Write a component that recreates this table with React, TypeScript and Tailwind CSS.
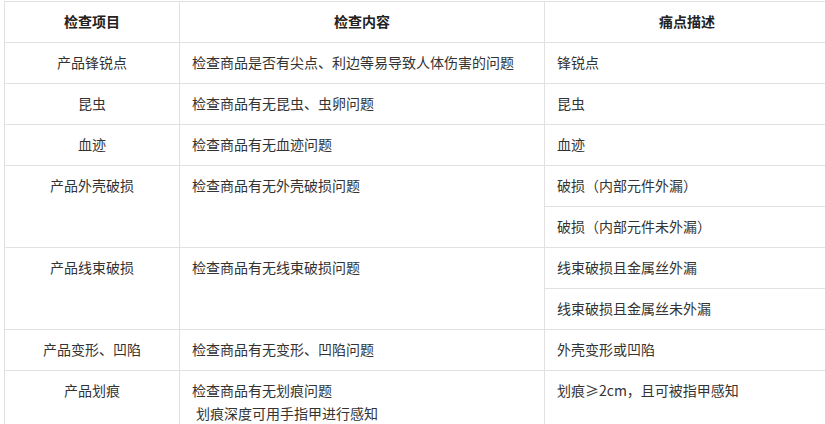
import React from 'react'

// 检查项 — 一行或多行痛点（多行时前两列合并）
interface Item {
  xiang: string
  neirong: React.ReactNode
  tongdian: string[]
}

const ITEMS: Item[] = [
  { xiang: '产品锋锐点', neirong: '检查商品是否有尖点、利边等易导致人体伤害的问题', tongdian: ['锋锐点'] },
  { xiang: '昆虫', neirong: '检查商品有无昆虫、虫卵问题', tongdian: ['昆虫'] },
  { xiang: '血迹', neirong: '检查商品有无血迹问题', tongdian: ['血迹'] },
  { xiang: '产品外壳破损', neirong: '检查商品有无外壳破损问题', tongdian: ['破损（内部元件外漏）', '破损（内部元件未外漏）'] },
  { xiang: '产品线束破损', neirong: '检查商品有无线束破损问题', tongdian: ['线束破损且金属丝外漏', '线束破损且金属丝未外漏'] },
  { xiang: '产品变形、凹陷', neirong: '检查商品有无变形、凹陷问题', tongdian: ['外壳变形或凹陷'] },
  {
    xiang: '产品划痕',
    neirong: (
      <>
        检查商品有无划痕问题
        <br />
        <span className="pl-[4px]">划痕深度可用手指甲进行感知</span>
      </>
    ),
    tongdian: ['划痕≥2cm，且可被指甲感知'],
  },
]

const cell = 'border border-[#e1e1e1] h-[41px] px-[12px] pt-[8px] pb-[9px] leading-[23px] align-top'

export default function App() {
  return (
    <div
      className="bg-white w-[825px] h-[424px] overflow-hidden pt-[1px] pl-[4px] text-[14px] text-[#333]"
      style={{ fontFamily: '"Microsoft YaHei", "Noto Sans CJK SC", sans-serif' }}
    >
      <table className="table-fixed border-collapse w-[825px]">
        <colgroup>
          <col className="w-[175px]" />
          <col className="w-[365px]" />
          <col className="w-[285px]" />
        </colgroup>
        <thead>
          <tr>
            <th className={`${cell} text-center font-bold text-[#222]`}>检查项目</th>
            <th className={`${cell} text-center font-bold text-[#222]`}>检查内容</th>
            <th className={`${cell} text-center font-bold text-[#222]`}>痛点描述</th>
          </tr>
        </thead>
        <tbody>
          {ITEMS.map(it =>
            it.tongdian.map((t, i) => (
              <tr key={it.xiang + i}>
                {i === 0 && (
                  <>
                    <td rowSpan={it.tongdian.length} className={`${cell} text-center`}>{it.xiang}</td>
                    <td rowSpan={it.tongdian.length} className={`${cell} text-left`}>{it.neirong}</td>
                  </>
                )}
                <td className={`${cell} text-left`}>{t}</td>
              </tr>
            ))
          )}
        </tbody>
      </table>
    </div>
  )
}
